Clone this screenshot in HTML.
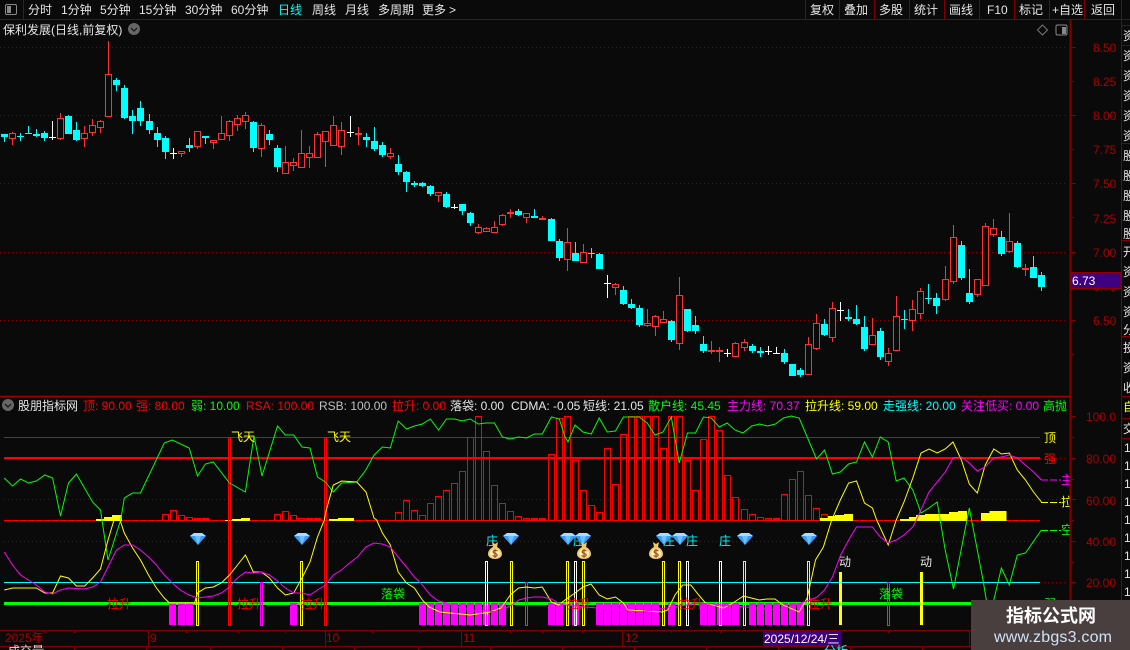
<!DOCTYPE html>
<html>
<head>
<meta charset="utf-8">
<style>
html,body{margin:0;padding:0;background:#0a0a0a;width:1130px;height:650px;overflow:hidden}
svg{display:block;position:absolute;left:0;top:0}
text{font-family:"Liberation Sans","WenQuanYi Zen Hei","Noto Sans CJK SC",sans-serif;font-size:12px}
.w{fill:#e6e6e6}.r{fill:#f00}.g{fill:#0f0}.y{fill:#ff0}.m{fill:#f0f}.c{fill:#0ff}.a{fill:#a80000}
</style>
</head>
<body>
<svg width="1130" height="650" viewBox="0 0 1130 650" fill="none">
<defs>
<symbol id="dia" viewBox="0 0 16 12" overflow="visible"><polygon points="4,0 12,0 16,3 8,12 0,3" fill="#3d9bf2"/><polygon points="4,0 12,0 16,3 0,3" fill="#a9dcff"/><polygon points="5,3 11,3 8,12" fill="#6cc0ff"/></symbol>
<symbol id="bag" viewBox="0 0 14 17" overflow="visible"><path d="M4 0l3 2 3-2-1 5C13 7 14 10 14 12c0 3-3 5-7 5s-7-2-7-5c0-2 1-5 5-7z" fill="#f2c96a"/><ellipse cx="7" cy="11.5" rx="5" ry="4.5" fill="#fff1c0"/><path d="M9.5 9C8 7.8 5 8.2 5.2 10c.2 1.8 4 1 4 3 0 1.6-3 1.700-4.700.5M7 7v9" stroke="#a3500f" stroke-width="1.200"/></symbol>
</defs>

<!-- toolbar -->
<path d="M0 19.500H1130M23.500 0V19M805.500 0V19M839.500 0V19M874.500 0V19M909.500 0V19M944.500 0V19M979.500 0V19M1014.500 0V19M1049.500 0V19M1084.500 0V19M1121.500 0V19" stroke="#800000"/>
<rect x="5.500" y="4.500" width="11" height="10" rx="1.500" stroke="#8a8a8a"/><rect x="7" y="6" width="4" height="7" fill="#8a8a8a"/>
<g class="w">
<text x="28" y="14">分时</text><text x="61" y="14">1分钟</text><text x="100" y="14">5分钟</text><text x="139" y="14">15分钟</text><text x="185" y="14">30分钟</text><text x="231" y="14">60分钟</text>
<text x="278" y="14" class="c">日线</text><text x="312" y="14">周线</text><text x="345" y="14">月线</text><text x="378" y="14">多周期</text><text x="422" y="14">更多</text><text x="449" y="14">&gt;</text>
<text x="810" y="14">复权</text><text x="844" y="14">叠加</text><text x="879" y="14">多股</text><text x="914" y="14">统计</text><text x="949" y="14">画线</text><text x="987" y="14">F10</text><text x="1019" y="14">标记</text><text x="1052" y="14">+自选</text><text x="1091" y="14">返回</text>
<text x="3" y="34">保利发展(日线,前复权)</text>
</g>
<circle cx="134" cy="29" r="6" fill="#666"/><path d="M131 28l3 3 3-3" stroke="#111" stroke-width="1.200"/>
<path d="M1042.500 25l5 5-5 5-5-5z" stroke="#777"/>
<rect x="1056" y="25" width="11" height="10" rx="1.500" stroke="#888"/><rect x="1062" y="27" width="4" height="7" fill="#888"/>

<!-- main grid -->
<path d="M0 47.500H1066M0 115.500H1066M0 183.500H1066M0 252.500H1066M0 320.500H1066" stroke="#8a0000" stroke-dasharray="1 3"/>

<!-- candles -->
<path stroke="#0ff" d="M4.500 134V142M20.500 133V141M28.500 126V134M36.500 129V137M44.500 131V141M68.500 115V134M76.500 122V141M116.500 78V91M124.500 85V119M132.500 110V134M140.500 101V126M149.500 114V134M157.500 127V147M165.500 136V159M189.500 138V152M205.500 136V144M253.500 121V152M269.500 130V145M277.500 145V172M366.500 133V147M374.500 127V151M382.500 142V157M398.500 155V175M406.500 171V192M414.500 181V187M422.500 182V187M430.500 185V196M446.500 192V208M462.500 204V215M470.500 212V226M518.500 209V216M534.500 209V218M551.500 218V241M559.500 239V261M575.500 242V261M591.500 248V258M599.500 253V269M623.500 286V305M631.500 299V309M639.500 305V327M671.500 320V342M687.500 309V332M695.500 316V334M703.500 336V353M752.500 344V353M760.500 347V357M784.500 349V364M792.500 364V376M800.500 368V377M824.500 319V336M848.500 309V321M856.500 305V325M864.500 316V351M880.500 328V360M904.500 310V329M928.500 284V304M936.500 293V314M961.500 241V280M969.500 269V304M1001.500 231V256M1017.500 241V268M1033.500 256V278M1041.500 272V291"/>
<path stroke="#0ff" stroke-width="7" d="M4.500 134V137M20.500 136V137M28.500 133V134M36.500 134V136M44.500 133V138M68.500 116V134M76.500 130V140M116.500 80V85M124.500 88V118M132.500 116V121M140.500 108V121M149.500 121V130M157.500 133V140M165.500 138V152M189.500 145V148M205.500 136V138M253.500 122V148M269.500 134V140M277.500 148V167M366.500 137V140M374.500 141V149M382.500 145V155M398.500 164V172M406.500 172V182M414.500 183V185M422.500 183V186M430.500 186V194M446.500 194V207M462.500 204V211M470.500 213V223M518.500 211V215M534.500 216V218M551.500 219V241M559.500 241V258M575.500 253V261M591.500 253V254M599.500 254V269M623.500 290V304M631.500 304V308M639.500 308V325M671.500 321V340M687.500 309V331M695.500 325V331M703.500 344V351M752.500 346V351M760.500 351V353M784.500 353V362M792.500 364V376M800.500 370V375M824.500 324V335M848.500 317V319M856.500 319V324M864.500 327V349M880.500 331V357M904.500 319V320M928.500 298V299M936.500 298V306M961.500 245V278M969.500 293V302M1001.500 237V254M1017.500 243V267M1033.500 267V278M1041.500 275V287"/>
<path stroke="#ff3232" d="M12.500 132V145M60.500 113V140M84.500 126V147M92.500 119V136M100.500 120V133M108.500 41V116M181.500 151V157M197.500 131V149M213.500 140V149M221.500 116V139M229.500 120V141M237.500 115V131M245.500 112V129M261.500 123V157M285.500 146V174M293.500 158V171M301.500 130V167M309.500 146V168M317.500 132V157M325.500 131V167M333.500 116V145M341.500 122V155M390.500 148V159M438.500 192V202M478.500 224V234M486.500 227V231M494.500 221V232M502.500 214V226M526.500 213V223M567.500 228V271M583.500 244V262M615.500 283V295M647.500 309V327M655.500 315V336M663.500 311V322M679.500 277V350M735.500 342V357M744.500 339V351M808.500 337V375M816.500 314V350M832.500 302V342M872.500 318V344M888.500 348V366M896.500 296V350M912.500 300V331M920.500 288V319M945.500 266V301M953.500 225V284M977.500 279V297M985.500 223V285M993.500 219V237M1009.500 213V253M358.500 127V145M510.500 209V218M542.500 216V220M711.500 341V354M719.500 347V362M1025.500 264V276"/>
<path stroke="#ff3232" fill="#0a0a0a" d="M9.500 133.500h6V138.500h-6zM57.500 118.500h6V138.500h-6zM81.500 133.500h6V138.500h-6zM89.500 125.500h6V132.500h-6zM97.500 121.500h6V127.500h-6zM105.500 74.500h6V116.500h-6zM178.500 151.500h6V153.500h-6zM194.500 131.500h6V146.500h-6zM210.500 140.500h6V142.500h-6zM218.500 133.500h6V139.500h-6zM226.500 121.500h6V135.500h-6zM234.500 118.500h6V124.500h-6zM242.500 115.500h6V121.500h-6zM258.500 125.500h6V148.500h-6zM282.500 162.500h6V173.500h-6zM290.500 162.500h6V165.500h-6zM298.500 153.500h6V167.500h-6zM306.500 153.500h6V157.500h-6zM314.500 134.500h6V157.500h-6zM322.500 131.500h6V141.500h-6zM330.500 125.500h6V145.500h-6zM338.500 130.500h6V146.500h-6zM387.500 153.500h6V156.500h-6zM435.500 192.500h6V195.500h-6zM475.500 227.500h6V232.500h-6zM483.500 228.500h6V231.500h-6zM491.500 227.500h6V232.500h-6zM499.500 215.500h6V224.500h-6zM523.500 213.500h6V217.500h-6zM564.500 242.500h6V259.500h-6zM580.500 252.500h6V262.500h-6zM612.500 284.500h6V287.500h-6zM644.500 323.500h6V325.500h-6zM652.500 316.500h6V326.500h-6zM660.500 319.500h6V322.500h-6zM676.500 295.500h6V343.500h-6zM732.500 343.500h6V356.500h-6zM741.500 342.500h6V347.500h-6zM805.500 344.500h6V374.500h-6zM813.500 323.500h6V348.500h-6zM829.500 308.500h6V337.500h-6zM869.500 335.500h6V344.500h-6zM885.500 353.500h6V361.500h-6zM893.500 316.500h6V350.500h-6zM909.500 309.500h6V320.500h-6zM917.500 291.500h6V313.500h-6zM942.500 279.500h6V299.500h-6zM950.500 237.500h6V281.500h-6zM974.500 279.500h6V294.500h-6zM982.500 226.500h6V285.500h-6zM990.500 228.500h6V234.500h-6zM1006.500 241.500h6V251.500h-6z"/>
<path stroke="#ff3232" stroke-width="7" d="M358.500 133V135M510.500 212V214M542.500 218V220M711.500 350V352M719.500 350V352M1025.500 268V270"/>
<path stroke="#fff" d="M52.500 121V140M49 137.500h7M173.500 148V159M170 153.500h7M350.500 116V137M347 132.500h7M454.500 204V209M451 207.500h7M607.500 275V298M604 283.500h7M727.500 349V357M724 353.500h7M768.500 346V355M765 351.500h7M776.500 347V354M773 353.500h7M840.500 302V321M837 310.500h7"/>

<!-- panel separators -->
<path d="M0 396.500H1121" stroke="#a00000" stroke-width="1.500"/>

<!-- legend -->
<circle cx="8" cy="405" r="6" fill="#666"/><path d="M5 404l3 3 3-3" stroke="#111" stroke-width="1.200"/>
<text x="18" y="410" class="w">股朋指标网</text>
<text x="83" y="410" class="r">顶: 90.00</text><text x="136" y="410" class="r">强: 80.00</text><text x="191" y="410" class="g">弱: 10.00</text><text x="246" y="410" class="r">RSA: 100.00</text><text x="319" y="410" fill="#c0c0c0">RSB: 100.00</text><text x="392" y="410" class="r">拉升: 0.00</text><text x="450" y="410" class="w">落袋: 0.00</text><text x="511" y="410" class="w">CDMA: -0.05</text><text x="583" y="410" class="w">短线: 21.05</text><text x="648" y="410" class="g">散户线: 45.45</text><text x="727" y="410" class="m">主力线: 70.37</text><text x="805" y="410" class="y">拉升线: 59.00</text><text x="883" y="410" class="c">走强线: 20.00</text><text x="961" y="410" class="m">关注低买: 0.00</text><text x="1043" y="410" class="g">高抛</text>

<!-- indicator grid -->
<path d="M4 499.500H1066M4 541.500H1066M1040 582.500H1066M1040 458.500H1066" stroke="#8a0000" stroke-dasharray="1 3"/>
<path d="M4 437.500H1040" stroke="#e00000"/>
<path d="M4 458H1040" stroke="#f00" stroke-width="2"/>
<path d="M4 582.500H1040" stroke="#0ff"/>
<path d="M4 603.500H972" stroke="#0f0" stroke-width="3"/>
<path d="M4 520.500H1040" stroke="#f00" stroke-dasharray="7 1"/>

<!-- magenta blocks -->
<path stroke="#f0f" stroke-width="7" d="M172.500 603V625M181.500 603V625M189.500 603V625M293.500 603V625M422.500 603V625M430.500 603V625M438.500 603V625M446.500 603V625M454.500 603V625M462.500 603V625M470.500 603V625M478.500 603V625M486.500 603V625M494.500 603V625M502.500 603V625M551.500 603V625M559.500 603V625M575.500 603V625M599.500 603V625M607.500 603V625M615.500 603V625M623.500 603V625M631.500 603V625M639.500 603V625M647.500 603V625M655.500 603V625M671.500 603V625M703.500 603V625M711.500 603V625M720.500 603V625M727.500 603V625M735.500 603V625M752.500 603V625M760.500 603V625M768.500 603V625M776.500 603V625M784.500 603V625M792.500 603V625M800.500 603V625"/>

<!-- red bars -->
<path stroke="#f00" d="M162.500 514.500h6V520.500h-6zM170.500 510.500h6V520.500h-6zM178.500 515.500h6V520.500h-6zM186.500 517.500h6V520.500h-6zM274.500 514.500h6V520.500h-6zM282.500 511.500h6V520.500h-6zM290.500 515.500h6V520.500h-6zM298.500 518.500h6V520.500h-6zM395.500 512.500h6V520.500h-6zM403.500 500.500h6V520.500h-6zM411.500 510.500h6V520.500h-6zM419.500 515.500h6V520.500h-6zM427.500 503.500h6V520.500h-6zM435.500 496.500h6V520.500h-6zM443.500 490.500h6V520.500h-6zM451.500 483.500h6V520.500h-6zM459.500 471.500h6V520.500h-6zM467.500 437.500h6V520.500h-6zM475.500 416.500h6V520.500h-6zM483.500 451.500h6V520.500h-6zM491.500 485.500h6V520.500h-6zM499.500 503.500h6V520.500h-6zM507.500 511.500h6V520.500h-6zM515.500 516.500h6V520.500h-6zM523.500 518.500h6V520.500h-6zM548.500 454.500h6V520.500h-6zM556.500 418.500h6V520.500h-6zM564.500 416.500h6V520.500h-6zM572.500 460.500h6V520.500h-6zM580.500 490.500h6V520.500h-6zM588.500 505.500h6V520.500h-6zM596.500 512.500h6V520.500h-6zM604.500 448.500h6V520.500h-6zM612.500 484.500h6V520.500h-6zM620.500 434.500h6V520.500h-6zM628.500 416.500h6V520.500h-6zM636.500 416.500h6V520.500h-6zM644.500 416.500h6V520.500h-6zM652.500 416.500h6V520.500h-6zM660.500 448.500h6V520.500h-6zM668.500 416.500h6V520.500h-6zM676.500 416.500h6V520.500h-6zM684.500 460.500h6V520.500h-6zM692.500 490.500h6V520.500h-6zM700.500 439.500h6V520.500h-6zM708.500 416.500h6V520.500h-6zM716.500 430.500h6V520.500h-6zM724.500 475.500h6V520.500h-6zM732.500 497.500h6V520.500h-6zM741.500 509.500h6V520.500h-6zM749.500 514.500h6V520.500h-6zM757.500 517.500h6V520.500h-6zM765.500 518.500h6V520.500h-6zM781.500 494.500h6V520.500h-6zM789.500 479.500h6V520.500h-6zM797.500 471.500h6V520.500h-6zM805.500 495.500h6V520.500h-6zM813.500 508.500h6V520.500h-6zM821.500 514.500h6V520.500h-6z"/>
<path fill="#f00" d="M194 518h7v3h-7zM202 518h7v3h-7zM306 518h7v3h-7zM314 518h7v3h-7zM531 518h7v3h-7zM539 518h7v3h-7zM773 518h7v3h-7zM829 518h7v3h-7z"/>

<!-- yellow blocks -->
<path fill="#ff0" d="M96 519h8v2h-8zM104 517h8v4h-8zM112 515h10v6h-10zM225 520h7v1h-7zM232 519h9v2h-9zM241 518h9v3h-9zM329 519h9v2h-9zM338 518h16v3h-16zM820 518h8v3h-8zM828 516h7v5h-7zM835 515h9v6h-9zM844 514h9v7h-9zM900 519h9v2h-9zM909 517h7v4h-7zM916 515h9v6h-9zM925 514h24v7h-24zM949 512h9v9h-9zM958 511h9v10h-9zM981 513h8.500v8h-8.500zM989.500 511h17v10h-17z"/>

<!-- signal markers -->
<g stroke="#f00"><rect x="228.500" y="437.500" width="2" height="188"/><rect x="324.500" y="437.500" width="2" height="188"/></g>
<g stroke="#ff0"><rect x="196.500" y="561.500" width="2" height="64"/><rect x="300.500" y="561.500" width="2" height="64"/><rect x="510.500" y="561.500" width="2" height="64"/><rect x="566.500" y="561.500" width="2" height="64"/><rect x="582.500" y="561.500" width="2" height="64"/><rect x="662.500" y="561.500" width="2" height="64"/><rect x="678.500" y="561.500" width="2" height="64"/><rect x="743.500" y="561.500" width="2" height="64"/><rect x="807.500" y="561.500" width="2" height="64"/></g>
<g stroke="#fff"><rect x="485.500" y="561.500" width="2" height="64"/><rect x="574.500" y="561.500" width="2" height="64"/><rect x="686.500" y="561.500" width="2" height="64"/><rect x="719.500" y="561.500" width="2" height="64"/></g>
<g stroke="#f0f"><rect x="260.500" y="582.500" width="2" height="43"/><rect x="525.500" y="582.500" width="2" height="43"/><rect x="887.500" y="582.500" width="2" height="43"/></g>
<path stroke="#ff0" stroke-width="3" d="M840.500 572V625M921.500 572V625"/>

<!-- lines -->
<polyline stroke="#0f0" points="4.300,478 12.600,486 20.500,479 28.500,483 36.400,481 44.700,475 52.600,478 60.500,516 68.500,483 76.400,474 92.600,502 100.500,510 102,520 108,560 120.700,520 124.300,498 132.600,493 140.500,493 164.300,443 172.300,440 189.200,448 197.500,476 205.400,464 213.300,462 229.500,483 245.400,492 254,436 262,476 277.500,426 285.400,435 293.700,435 302,447 310,448 317.500,477 325.400,482 333.300,492 341.600,483 356.800,482 365.800,470 374,455 382.400,447 390.300,448 398.200,421 406.500,429 414.400,426 422.400,424 430.300,419 438.600,430 446.500,419 454.400,419 462.300,421 470.300,419 478.200,424 486.100,423 494.500,423 502.300,437 510.300,439 518.600,437 526.500,438 534.400,434 542.300,434 551.400,417 559.300,419 565,437 568,442 575,425 583,432 591.300,434 599.200,418 607.200,432 615.500,431 623.400,417 639.200,417 647.200,423 655,435 663,432 671.300,417 679.200,463 687.500,433 695.500,433 703.400,417 711.300,418 719.200,427 727.200,423 735,430 743,433 751.700,426 759.600,424 767.500,426 775.500,424 783.400,418 791.300,416 799.200,418 807.200,437 816.500,459 824.500,450 832.400,474 840.300,472 848.600,464 856.500,462 864.500,442 872.400,457 880.300,437 888.200,442 896.200,481 904,478 912.800,490 921,513 929,508 937.200,502 945.200,550 953.500,589 969.300,508 983,580 988,610 993.800,600 1001.400,568 1009.300,585 1017.300,555 1025.500,553 1041.400,530"/>
<polyline stroke="#ff0" points="4.300,590 12.600,588 20.500,588 36.400,588 44.700,593 52.600,593 60.500,576 68.500,578 76.400,586 84.700,586 92.600,578 100.500,569 108,540 114,520 120,520 124.300,533 132.600,548 140.500,560 148.500,575 156.400,588 164.300,598 169.400,603 194.600,603 197.500,593 205.400,588 213.300,587 221.300,583 229.500,575 237.500,565 245.400,555 253.300,572 261.300,572 269.500,578 277.500,588 285.400,595 293.700,593 302,578 310,562 317.500,537 324.300,520 326,511 333.300,485 341.600,481 356.800,482 366,492 374,518 376.600,520 382.400,533 390.300,545 398.200,572 406.500,583 414.400,588 422.400,600 429,607 440,612 470,615 490,612 501,608 510.300,595 518.600,588 526.500,587 534.400,588 542.300,587 551.400,602 558.600,605 565,600 575,593 583,587 591,584 599.200,595 607.200,599 615.500,597 623.400,603 628,610 662.300,612 667.700,610 675,595 682.800,585 690.800,585 698.700,595 705.500,603 723.600,608 734.400,602 743.400,596 751.300,598 759.200,600 767,599 775,599 783,605 799,612 807.200,598 815.500,560 823.400,547 831.700,520 840.300,500 848.600,483 856.500,481 864.500,503 872.400,508 876.700,520 888.200,545 896.200,520 904,502 912.800,478 921,453 929,449 937.200,453 945.200,449 953,442 961.400,460 969.300,484 977.300,493 985.200,465 993.800,449 1001.400,454 1009.300,453 1017.300,470 1025.500,480 1033.500,492 1041.400,502"/>
<polyline stroke="#f0f" points="4.300,552 12.600,565 20.500,575 28.500,580 36.400,585 44.700,592 52.600,594 60.500,590 68.500,588 84.700,589 92.600,587 100.500,582 108,567 116.400,550 124.300,545 132.600,545 140.500,550 148.500,557 156.400,565 164.300,575 172.300,583 180.200,590 189.200,595 197.500,598 205.400,597 213.300,596 221.300,593 229.500,587 237.500,578 245.400,572 253.300,573 261.300,572 269.500,575 277.500,581 285.400,588 293.700,593 302,593 310,595 317.500,590 325.400,585 333.300,575 341.600,570 349.500,563 357.500,557 365.800,547 374,543 382.400,544 390.300,547 398.200,557 406.500,567 414.400,577 422.400,585 430.300,595 438.600,601 446.500,603 470,610 500,612 506,608 511.700,605 518.900,600 526.500,598 534.400,597 542.300,597 551.400,599 558.600,603 565,605 640,612 700,603 780,610 810,600 817.300,597 824.500,590 832.400,577 840.700,555 848.600,540 856.500,527 872.400,527 880.300,537 888.200,543 896.200,540 904,535 912.800,527 916.400,520 929,492 937.200,482 945.200,472 953,458 961.400,457 969.300,463 977.300,471 985.200,467 993.800,458 1001.400,457 1009.300,455 1017.300,458 1025.500,465 1033.500,472 1041.400,480"/>
<path d="M1041 480H1061" stroke="#f0f" stroke-dasharray="7 2"/><path d="M1041 502.500H1061" stroke="#ff0" stroke-dasharray="7 2"/><path d="M1041 530.500H1061" stroke="#0f0" stroke-dasharray="7 2"/>

<!-- chart labels -->
<text x="231" y="441" class="y">飞天</text><text x="327" y="441" class="y">飞天</text>
<text x="107" y="608" class="r">拉升</text><text x="237" y="608" class="r">拉升</text><text x="301" y="608" class="r">拉升</text><text x="567" y="608" class="r">拉升</text><text x="679" y="608" class="r">拉升</text><text x="808" y="608" class="r">拉升</text>
<text x="381" y="598" class="g">落袋</text><text x="879" y="598" class="g">落袋</text>
<text x="839" y="566" class="w">动</text><text x="920" y="566" class="w">动</text>
<text x="486" y="545" class="c">庄</text><text x="573" y="545" class="c">庄</text><text x="663" y="545" class="c">庄</text><text x="686" y="545" class="c">庄</text><text x="719" y="545" class="c">庄</text>
<use href="#dia" x="190" y="533" width="16" height="12"/><use href="#dia" x="294" y="533" width="16" height="12"/><use href="#dia" x="503" y="533" width="16" height="12"/><use href="#dia" x="560" y="533" width="16" height="12"/><use href="#dia" x="575" y="533" width="16" height="12"/><use href="#dia" x="656" y="533" width="16" height="12"/><use href="#dia" x="672" y="533" width="16" height="12"/><use href="#dia" x="737" y="533" width="16" height="12"/><use href="#dia" x="801" y="533" width="16" height="12"/>
<use href="#bag" x="488" y="542" width="14" height="17"/><use href="#bag" x="577" y="542" width="14" height="17"/><use href="#bag" x="649" y="542" width="14" height="17"/>
<text x="1044" y="442" class="y">顶</text><text x="1044" y="463" class="r">强</text><text x="1061" y="484" class="m">主</text><text x="1061" y="506" class="y">拉</text><text x="1061" y="534" class="g">空</text><text x="1044" y="608" class="g">弱</text>

<!-- axis -->
<rect x="1071" y="20" width="50" height="610" fill="#0a0a0a"/>
<path d="M1070.500 20V646" stroke="#800000" stroke-width="2"/>
<path d="M1121.500 20V650" stroke="#800000"/>
<path d="M1071 47.500h5M1071 81.500h3M1071 115.500h5M1071 149.500h3M1071 183.500h5M1071 217.500h3M1071 252.500h5M1071 320.500h5M1071 354.500h3M1071 416.500h5M1071 437.500h3M1071 458.500h5M1071 479.500h3M1071 499.500h5M1071 520.500h3M1071 541.500h5M1071 562.500h3M1071 582.500h5M1071 603.500h3" stroke="#800000"/>
<g class="a"><text x="1093" y="52">8.50</text><text x="1093" y="86">8.25</text><text x="1093" y="120">8.00</text><text x="1093" y="154">7.75</text><text x="1093" y="188">7.50</text><text x="1093" y="223">7.25</text><text x="1093" y="257">7.00</text><text x="1093" y="291">6.75</text><text x="1093" y="325">6.50</text>
<text x="1086" y="421">100.0</text><text x="1086" y="463">80.00</text><text x="1086" y="505">60.00</text><text x="1086" y="546">40.00</text><text x="1086" y="587">20.00</text></g>
<rect x="1071" y="272.500" width="50" height="16" fill="#3f0080" stroke="#900000"/>
<text x="1072" y="285" fill="#fff">6.73</text>

<!-- right strip -->
<rect x="1122" y="20" width="8" height="630" fill="#0a0a0a"/>
<path d="M1122 25.500h8M1122 45.500h8M1122 143.500h8M1122 240.500h8M1122 336.500h8M1122 396.500h8M1122 418.500h8M1122 438.500h8" stroke="#800000"/>
<g class="w"><text x="1123" y="40">资</text><text x="1123" y="60">资</text><text x="1123" y="80">资</text><text x="1123" y="100">资</text><text x="1123" y="120">资</text><text x="1123" y="140">资</text><text x="1123" y="160">股</text><text x="1123" y="180">股</text><text x="1123" y="200">股</text><text x="1123" y="220">股</text><text x="1123" y="238">股</text><text x="1123" y="256">开</text><text x="1123" y="276">资</text><text x="1123" y="296">资</text><text x="1123" y="316">资</text><text x="1123" y="334">分</text><text x="1123" y="352">投</text><text x="1123" y="372">资</text><text x="1123" y="392">收</text>
<text x="1123" y="411" class="y">自</text><text x="1123" y="433">交</text><text x="1124" y="452">1</text><text x="1124" y="470">1</text><text x="1124" y="488">1</text><text x="1124" y="506">1</text><text x="1124" y="524">1</text><text x="1124" y="542">1</text><text x="1124" y="560">1</text><text x="1124" y="578">1</text><text x="1124" y="596">1</text></g>

<!-- time axis -->
<path d="M0 630.500H1121M0 646.500H1121M148.500 630V646M325.500 630V646M461.500 630V646M622.500 630V646M969.500 630V646M44.500 630v3M74.500 630v3M186.500 630v3M238.500 630v3M285.500 630v3M372.500 630v3M419.500 630v3M510.500 630v3M542.500 630v3M582.500 630v3M671.500 630v3M720.500 630v3M793.500 630v3M888.500 630v3M43.500 646v4M74.500 646v4M146.500 646v4M210.500 646v4M282.500 646v4M354.500 646v4M418.500 646v4M490.500 646v4M562.500 646v4M634.500 646v4M706.500 646v4M778.500 646v4M850.500 646v4M922.500 646v4" stroke="#800000"/>
<text x="5" y="642" class="a">2025年</text><text x="150" y="642" class="a">9</text><text x="326" y="642" class="a">10</text><text x="463" y="642" class="a">11</text><text x="625" y="642" class="a">12</text>
<rect x="763" y="631" width="78" height="15" fill="#3f0080"/>
<text x="764" y="643" fill="#fff">2025/12/24/三</text>
<text x="8" y="655" class="w">成交量</text><text x="824" y="655" class="c">分析</text>

<!-- watermark -->
<rect x="971" y="600" width="159" height="50" fill="#4a3f3f"/>
<text x="1006" y="622" fill="#fff" style="font-size:18px;font-weight:bold;font-family:'Noto Sans CJK SC','WenQuanYi Zen Hei',sans-serif">指标公式网</text>
<text x="994" y="642" fill="#cfe3f5" style="font-size:16px;letter-spacing:.2px">www.zbgs3.com</text>
</svg>
</body>
</html>
